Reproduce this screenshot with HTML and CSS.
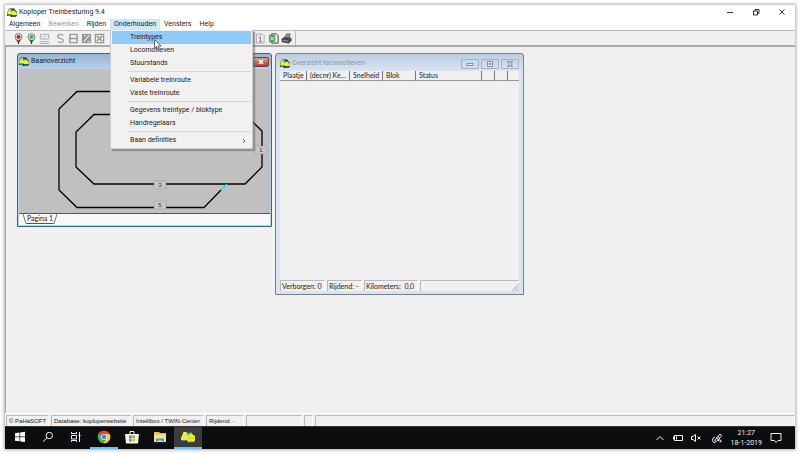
FILE: index.html
```html
<!DOCTYPE html>
<html lang="nl">
<head>
<meta charset="utf-8">
<title>Koploper Treinbesturing 9.4</title>
<link rel="stylesheet" href="styles.css">
</head>
<body>
<svg class="defs" aria-hidden="true">
  <symbol id="train" viewBox="0 0 10 9">
    <path d="M0 5L2 .5h5.500l1 2L10 4v3.500L8.500 9H4L3 8H0z" fill="#3a3f28"/>
    <path d="M.3 5L2.300 1h4.400L8 3.500l1.700 1V7H5.500L4.500 6.500H.3z" fill="#fbf620"/>
    <path d="M4 .7h3l.8 2H3.500z" fill="#2a5058"/>
    <path d="M3.500 2.700h2.500v1.500h-3z" fill="#6fd6d0"/>
    <path d="M1 7.500h2.500M5.500 8h3" stroke="#17988c"/>
  </symbol>
  <symbol id="signal" viewBox="0 0 10 12">
    <circle cx="5" cy="4.300" r="3.800" fill="#f4f4f4" stroke="#555" stroke-width=".8"/>
    <circle cx="5" cy="4.300" r="2.300" fill="currentColor"/>
    <path d="M5 8V12M3 8.500h4" stroke="#333" stroke-width="1.400"/>
  </symbol>
</svg>
<div class="screen">
  <header class="titlebar">
    <svg class="train"><use href="#train"/></svg>
    <h1 class="title">Koploper Treinbesturing 9.4</h1>
    <div class="window-controls">
      <button aria-label="Minimaliseren"><svg viewBox="0 0 8 8"><path d="M1 4.500h6"/></svg></button>
      <button aria-label="Herstellen"><svg viewBox="0 0 8 8"><path d="M1.500 3h4v4h-4zM3 3V1.500h4v4H5.500"/></svg></button>
      <button aria-label="Sluiten"><svg viewBox="0 0 8 8"><path d="M1.500 1.500l5 5M6.500 1.500l-5 5"/></svg></button>
    </div>
  </header>
  <nav class="menubar">
    <button>Algemeen</button>
    <button disabled>Bewerken</button>
    <button>Rijden</button>
    <div class="menu-holder">
      <button class="open" aria-expanded="true">Onderhouden</button>
      <div class="dropdown">
        <button class="selected">Treintypes</button>
        <button>Locomotieven</button>
        <button>Stuurstands</button>
        <hr>
        <button>Variabele treinroute</button>
        <button>Vaste treinroute</button>
        <hr>
        <button>Gegevens treintype / bloktype</button>
        <button>Handregelaars</button>
        <hr>
        <button>Baan definities<svg class="chevron" viewBox="0 0 4 6"><path d="M1 1l2 2-2 2"/></svg></button>
        <svg class="cursor" viewBox="0 0 8 12"><path d="M.5.500v8.800l2-1.800 1.300 3.300 1.500-.6L4 7h3z" fill="#fff" stroke="#333" stroke-width=".7"/></svg>
      </div>
    </div>
    <button>Vensters</button>
    <button>Help</button>
  </nav>
  <div class="toolbar">
    <div class="tools tools-left">
      <button class="red" aria-label="Stop"><svg><use href="#signal"/></svg></button>
      <button class="green" aria-label="Start"><svg><use href="#signal"/></svg></button>
      <button aria-label="Toetsenbord"><svg viewBox="0 0 12 12" fill="none" stroke="#aaa"><path d="M1.500 1.500h9v5h-9zM.5 9.500h11M1 11.500h10" /><path d="M3 4h6M6 7v2" stroke-dasharray="1 1"/></svg></button>
      <button class="spaced" aria-label="Sein"><svg viewBox="0 0 12 12" fill="none" stroke="#a0a0a0" stroke-width="1.400"><path d="M9 3Q8 1.500 6 1.500 3 1.500 3 3.700 3 5.300 6 6q3 .7 3 2.500Q9 10.500 6 10.500 4 10.500 3 9"/></svg></button>
      <button aria-label="Blok"><svg viewBox="0 0 12 12" fill="none" stroke="#999" stroke-width="1.600"><path d="M2 1.500h8v9H2zM2 6h8"/></svg></button>
      <button aria-label="Wissel"><svg viewBox="0 0 12 12"><path d="M1 1h10v10H1z" fill="#949494"/><path d="M3 9.500l6-7M3 3h2.500M7 9.500h2.500" stroke="#eee" stroke-width="1.300"/></svg></button>
      <button aria-label="Kruising"><svg viewBox="0 0 12 12" fill="none" stroke="#999"><path d="M1.500 1.500h9v9h-9z" stroke-width="1.400"/><path d="M3 3l6 6M9 3l-6 6" stroke-width="1.800"/></svg></button>
    </div>
    <div class="tools tools-right">
      <button aria-label="Informatie"><svg viewBox="0 0 12 12" fill="none" stroke="#aaa"><path d="M1.500 1h6.500l2 2v8H1.500z"/><path d="M4 5h2v4.500M4 9.500h4M5 3h1.500" stroke="#777"/></svg></button>
      <button aria-label="Exporteren"><svg viewBox="0 0 12 12"><path d="M4 1h5l2 2v8H4z" fill="#fff" stroke="#333"/><path d="M1 2h7v8H1z" fill="#4aa854"/><path d="M2.500 4l4 4M6.500 4l-4 4" stroke="#fff"/></svg></button>
      <button aria-label="Afdrukken"><svg viewBox="0 0 12 12"><path d="M4 5l2-4h4L9 5z" fill="#999" stroke="#333" stroke-width=".7"/><path d="M.5 6.500L3 4.500h7l1.500 1v3l-3 3L1 10z" fill="#444"/><path d="M2 8l6 1M9 6h1.500" stroke="#aaa"/></svg></button>
    </div>
  </div>
  <main class="desktop">
    <section class="child track-window">
      <header class="child-title">
        <svg class="train"><use href="#train"/></svg>
        <h2>Baanoverzicht</h2>
        <button class="close" aria-label="Sluiten"><svg viewBox="0 0 8 6"><path d="M2 1l4 4M6 1L2 5" stroke="#fff" stroke-width="1.500"/></svg></button>
      </header>
      <div class="track-body">
        <svg class="track" viewBox="0 0 251 144">
          <g fill="none" stroke="#000" stroke-width="1.300">
            <path d="M160 22.500H58L40 40V121L58 138.500H185L202 121"/>
            <path d="M75 45.500H226L243 62V98L226 115H75L57 98V63z"/>
          </g>
          <path d="M202 121l6-6" stroke="#0ee" stroke-width="1.300"/>
          <g class="block-label">
            <rect x="135" y="112" width="12" height="8"/><text x="141" y="118">3</text>
            <rect x="135" y="132" width="12" height="8"/><text x="141" y="138">5</text>
            <rect x="236" y="77" width="12" height="8"/><text x="242" y="83">1</text>
          </g>
        </svg>
        <footer class="page-tabs">
          <svg class="tab-edge" viewBox="0 0 4 10"><path d="M0 0l3 9.500h1"/></svg><button>Pagina 1</button><svg class="tab-edge" viewBox="0 0 4 10"><path d="M0 9.500h1L4 0"/></svg>
        </footer>
      </div>
    </section>
    <section class="child loco-window">
      <header class="child-title">
        <svg class="train"><use href="#train"/></svg>
        <h2>Overzicht locomotieven</h2>
        <div class="child-controls">
          <button aria-label="Minimaliseren"><svg viewBox="0 0 8 6"><path d="M1 2.500h6v2H1z"/></svg></button>
          <button aria-label="Maximaliseren"><svg viewBox="0 0 8 6"><path d="M1.500.500h5v5h-5zM3 2.500h2v1H3z"/></svg></button>
          <button aria-label="Sluiten"><svg viewBox="0 0 8 6"><path d="M1.500.500h1.500l1 1.500 1-1.500h1.500L5 3l1.500 2.500H5L4 4 3 5.500H1.500L3 3z"/></svg></button>
        </div>
      </header>
      <div class="loco-body">
        <table class="loco-table">
          <colgroup><col class="c-picture"><col class="c-mark"><col class="c-speed"><col class="c-block"><col class="c-status"><col class="c-small"><col class="c-small"><col class="c-rest"></colgroup>
          <thead><tr><th>Plaatje</th><th>(decnr) Ke...</th><th>Snelheid</th><th>Blok</th><th>Status</th><th></th><th></th><th></th></tr></thead>
        </table>
        <footer class="statusbar loco-status">
          <span class="s-hidden">Verborgen: 0</span><span class="s-riding">Rijdend: -</span><span class="s-km">Kilometers:&nbsp; 0,0</span><span class="rest"></span>
          <svg class="grip" viewBox="0 0 7 7"><path d="M0 7l7-7M2.500 7L7 2.500M5 7l2-2"/></svg>
        </footer>
      </div>
    </section>
  </main>
  <footer class="statusbar main-status">
    <span class="m-copy">© PaHaSOFT</span><span class="m-data">Database: koploperwebsite</span><span class="m-center">Intellibox / TWIN-Center</span><span class="m-riding">Rijdend: -</span><span class="m-blank"></span><span class="m-tiny"></span><span class="rest"></span>
  </footer>
  <footer class="taskbar">
    <nav class="apps">
      <button aria-label="Start"><svg viewBox="0 0 14 14"><path fill="#fff" d="M2 3.200l4.500-.6v4H2zM7.200 2.500l4.800-.7v4.800H7.200zM2 7.300h4.500v4L2 10.700zM7.200 7.300H12v4.800l-4.800-.7z"/></svg></button>
      <button aria-label="Zoeken"><svg class="line" viewBox="0 0 14 14"><circle cx="8.300" cy="5.500" r="3.200"/><path d="M6 7.800l-4 4"/></svg></button>
      <button aria-label="Taakweergave"><svg class="line" viewBox="0 0 14 14"><path d="M2.500 2v1.500h5V2M2.500 5.500h5v3.500h-5zM2.500 12v-1.500h5V12M10.500 2v10M9.500 5.500h2"/></svg></button>
      <button class="running" aria-label="Chrome"><svg viewBox="0 0 14 14"><circle cx="7" cy="7" r="6.300" fill="#4caf50"/><path d="M7 7L1.500 3.800A6.300 6.300 0 0 1 12.500 4z" fill="#e94335"/><path d="M7 4h5.500A6.300 6.300 0 0 1 6.500 13.300L9.600 8.500z" fill="#fdc92f"/><circle cx="7" cy="7" r="3.100" fill="#f5f5f5"/><circle cx="7" cy="7" r="2.400" fill="#4688ec"/></svg></button>
      <button aria-label="Store"><svg viewBox="0 0 14 14"><path d="M5 4V1.500h4V4" fill="none" stroke="#fff"/><path d="M0 4h14l-1 9.500H1z" fill="#f5f5f5"/><path d="M4 5.500h2.700v2.700H4z" fill="#e4512f"/><path d="M7.300 5.500H10v2.700H7.300z" fill="#7fb92b"/><path d="M4 8.800h2.700v2.700H4z" fill="#22a2e5"/><path d="M7.300 8.800H10v2.700H7.300z" fill="#f8b820"/></svg></button>
      <button aria-label="Verkenner"><svg viewBox="0 0 14 14"><path d="M1 2h5l1 1h6v9H1z" fill="#e8bd54"/><path d="M1 4.500h12V12H1z" fill="#fbe08c"/><path d="M3 12.500V8.500h8v4H9.300V10.500H4.700v2z" fill="#35a0e0"/></svg></button>
      <button class="running active" aria-label="Koploper"><svg viewBox="0 0 14 14"><path d="M0 8L2.500 2H10l1.500 2.500L14 6v4.500L12.500 12H7L5.500 10H0z" fill="#f4ee2a"/><path d="M6 2h3.500l1 1.500H5.500z" fill="#24525a"/><path d="M5.500 4h3.500v1.500H5z" fill="#60cfc8"/><path d="M7 8h6.500" stroke="#c9c420"/><path d="M1 10.500h4M7 12h5" stroke="#2b9a8c"/></svg></button>
    </nav>
    <div class="tray">
      <svg class="tray-icon line" viewBox="0 0 12 12"><path d="M2.500 8L6 4.500 9.500 8"/></svg>
      <svg class="tray-icon line battery" viewBox="0 0 12 12"><path d="M2.500 3.500h8v5h-8z"/><path d="M1.500 4.500v3M4.500 4.500v3"/></svg>
      <svg class="tray-icon line" viewBox="0 0 12 12"><path d="M1.500 4.500H3l2.500-2v7L3 7.500H1.500zM7.500 4.500l3 3M10.500 4.500l-3 3"/></svg>
      <svg class="tray-icon line pen" viewBox="0 0 12 12"><path d="M3.500 8.500L9 2l1.800 1.500L5.500 9.500zM4 5Q1 6 1.500 8.500t3 2M7 9q2-2 3-.5T8.500 10M5 6l3 2M6.500 4.500l2.500 2"/></svg>
      <time class="clock" datetime="2019-01-18T21:27"><span>21:27</span><span>18-1-2019</span></time>
      <svg class="tray-icon line note" viewBox="0 0 12 12"><path d="M1 1.500h10v7H8L6 10.500 4.500 8.500H1z"/></svg>
    </div>
  </footer>
</div>
</body>
</html>
```

FILE: styles.css
```css
* { box-sizing: border-box; }

body {
  margin: 0;
  padding: 5px;
  min-height: 100vh;
  display: flex;
  background: #fff;
  color: #222;
  font: 7px/9px Roboto, "Open Sans", sans-serif;
}

button {
  margin: 0;
  padding: 0;
  border: 0;
  background: none;
  color: inherit;
  font: inherit;
}

h1, h2 { margin: 0; font: inherit; }
svg { display: block; }
.defs { position: absolute; width: 0; height: 0; }
.train { width: 10px; height: 9px; flex: none; }

.screen {
  flex: 1;
  display: flex;
  flex-direction: column;
  min-width: 0;
  background: #fff;
  box-shadow: 0 0 3px 1px #aaa;
}

/* Main window */
.titlebar {
  display: flex;
  align-items: center;
  gap: 2px;
  height: 14px;
  padding: 0 9px 0 2px;
}
.title { flex: 1; }
.window-controls { display: flex; gap: 18px; }
.window-controls svg { width: 8px; height: 8px; fill: none; stroke: #333; stroke-width: 1; }

.menubar { display: flex; height: 11px; }
.menubar > button, .open { padding: 0 4px; line-height: 11px; }
.menubar button:disabled { color: #999; }
.menu-holder { position: relative; }
.open { background: #cce8ff; }

.dropdown {
  position: absolute;
  z-index: 5;
  top: 11px;
  left: 0;
  width: 143px;
  padding: 1px;
  border: 1px solid #ccc;
  border-top-width: 0;
  background: #f1f1f1;
  box-shadow: 2px 2px 1px #6668;
}
.dropdown button {
  display: flex;
  align-items: center;
  justify-content: space-between;
  width: 100%;
  height: 13px;
  padding: 0 5px 0 18px;
  white-space: nowrap;
}
.dropdown .selected { background: #91c9f7; }
.dropdown hr { height: 1px; margin: 1px 0 2px 16px; border: 0; background: #d5d5d5; }
.chevron { width: 4px; height: 6px; fill: none; stroke: #444; stroke-width: .8; }
.cursor { position: absolute; top: 9px; left: 43px; width: 8px; height: 12px; }

.toolbar {
  display: flex;
  height: 17px;
  border-top: 1px solid #bbb;
  border-bottom: 2px solid #aaa;
  background: #f0f0f0;
}
.tools { display: flex; align-items: center; padding: 0 1px; border-right: 1px solid #bbb; }
.tools svg { width: 11px; height: 11px; }
.tools button { width: 13px; }
.tools .spaced { margin-left: 3px; }
.tools-left { width: 249px; padding-left: 8px; }
.red { color: #d92525; }
.green { color: #27c437; }

.desktop {
  position: relative;
  flex: 1;
  border-left: 1px solid #aaa;
  background: #f0f0f0;
}

/* Child windows */
.child {
  position: absolute;
  top: 6px;
  display: flex;
  flex-direction: column;
  border: 1px solid #777f88;
  border-radius: 3px 3px 0 0;
}
.child-title { display: flex; align-items: center; gap: 2px; height: 15px; }
.child-title h2 { flex: 1; }

.track-window {
  left: 11px;
  width: 255px;
  padding: 0 1px 1px;
  border-color: #286d87;
  background: linear-gradient(#98b4d1, #b9d1ea 15px);
}
.close {
  display: grid;
  place-items: center;
  width: 17px;
  height: 10px;
  margin-right: 1px;
  border: 1px solid #743c38;
  border-radius: 2px;
  background: linear-gradient(#e2a093, #bd3726);
}
.close svg, .child-controls svg { width: 8px; height: 6px; }
.track { width: 100%; background: #c0c0c0; }
.block-label rect { fill: #c6c6c6; stroke: #999; stroke-width: .5; }
.block-label text { fill: #333; font: 6px "Liberation Sans", sans-serif; text-anchor: middle; }
.page-tabs {
  display: flex;
  height: 12px;
  padding-left: 4px;
  border-top: 1px solid #555;
  background: #f8f8f8;
  font: 7px/9px Lato, "Liberation Sans", sans-serif;
}
.page-tabs button { height: 10px; border-bottom: 1px solid #555; }
.tab-edge { width: 4px; height: 10px; fill: none; stroke: #555; stroke-width: .8; }

.loco-window {
  left: 269px;
  width: 249px;
  height: 242px;
  padding: 0 4px 3px;
  background: linear-gradient(#bdcee0, #d7e4f2 17px);
}
.loco-window .child-title { height: 17px; padding-top: 2px; color: #8c939c; }
.child-controls { display: flex; gap: 2px; }
.child-controls button {
  display: grid;
  place-items: center;
  width: 18px;
  height: 10px;
  border: 1px solid #a3b1c0;
  border-radius: 1px;
}
.child-controls svg { fill: #eee; stroke: #626c76; stroke-width: .7; }
.loco-body { flex: 1; display: flex; flex-direction: column; background: #f0f0f0; }
.loco-table {
  width: 100%;
  table-layout: fixed;
  border-collapse: separate;
  border-spacing: 0;
  font: 7px/9px Lato, "Liberation Sans", sans-serif;
}
.loco-table th {
  height: 10px;
  padding: 0 0 0 3px;
  border-right: 1px solid #777;
  border-bottom: 1px solid #999;
  font-weight: normal;
  text-align: left;
  white-space: nowrap;
}
.loco-table th:last-child { border-right: 0; }
.c-picture { width: 27px; }
.c-mark { width: 43px; }
.c-speed, .c-block { width: 33px; }
.c-status { width: 66px; }
.c-small { width: 13px; }

.statusbar {
  display: flex;
  gap: 2px;
  background: #f0f0f0;
  font: 7px/10px Lato, "Liberation Sans", sans-serif;
  white-space: nowrap;
}
.statusbar span { padding-left: 1px; border-top: 1px solid #bbb; border-left: 1px solid #bbb; border-right: 1px solid #fff; }
.statusbar .rest { flex: 1; }
.loco-status { position: relative; height: 11px; margin-top: auto; }
.s-hidden { width: 45px; }
.s-riding { width: 35px; }
.s-km { width: 54px; }
.grip { position: absolute; right: 0; bottom: 0; width: 7px; height: 7px; stroke: #999; stroke-width: .8; }

.main-status {
  height: 13px;
  padding: 1px 0 0 1px;
  border-top: 1px solid #fff;
  font: 6px/10px "Liberation Sans", sans-serif;
}
.main-status span { padding-left: 2px; }
.m-copy { width: 43px; }
.m-data { width: 80px; }
.m-center { width: 71px; }
.m-riding { width: 38px; }
.m-blank { width: 56px; }
.m-tiny { width: 9px; }

/* Taskbar */
.taskbar {
  display: flex;
  justify-content: space-between;
  height: 23px;
  border-top: 1px solid #333;
  background: #0c0d0e;
  color: #f2f2f2;
}
.apps { display: flex; padding-left: 1px; }
.apps button {
  display: grid;
  place-items: center;
  width: 28px;
  border-bottom: 2px solid transparent;
}
.apps svg { width: 14px; height: 14px; }
.apps .running { border-bottom-color: #76b9ed; }
.apps .active { background: #3a3b3d; }
.line { fill: none; stroke: #f2f2f2; stroke-width: 1; }
.tray { display: flex; align-items: center; gap: 6px; padding-right: 13px; }
.tray-icon { width: 12px; height: 12px; }
.pen { margin-left: 3px; }
.clock { display: flex; flex-direction: column; align-items: center; line-height: 10px; margin: 0 2px; }
```
